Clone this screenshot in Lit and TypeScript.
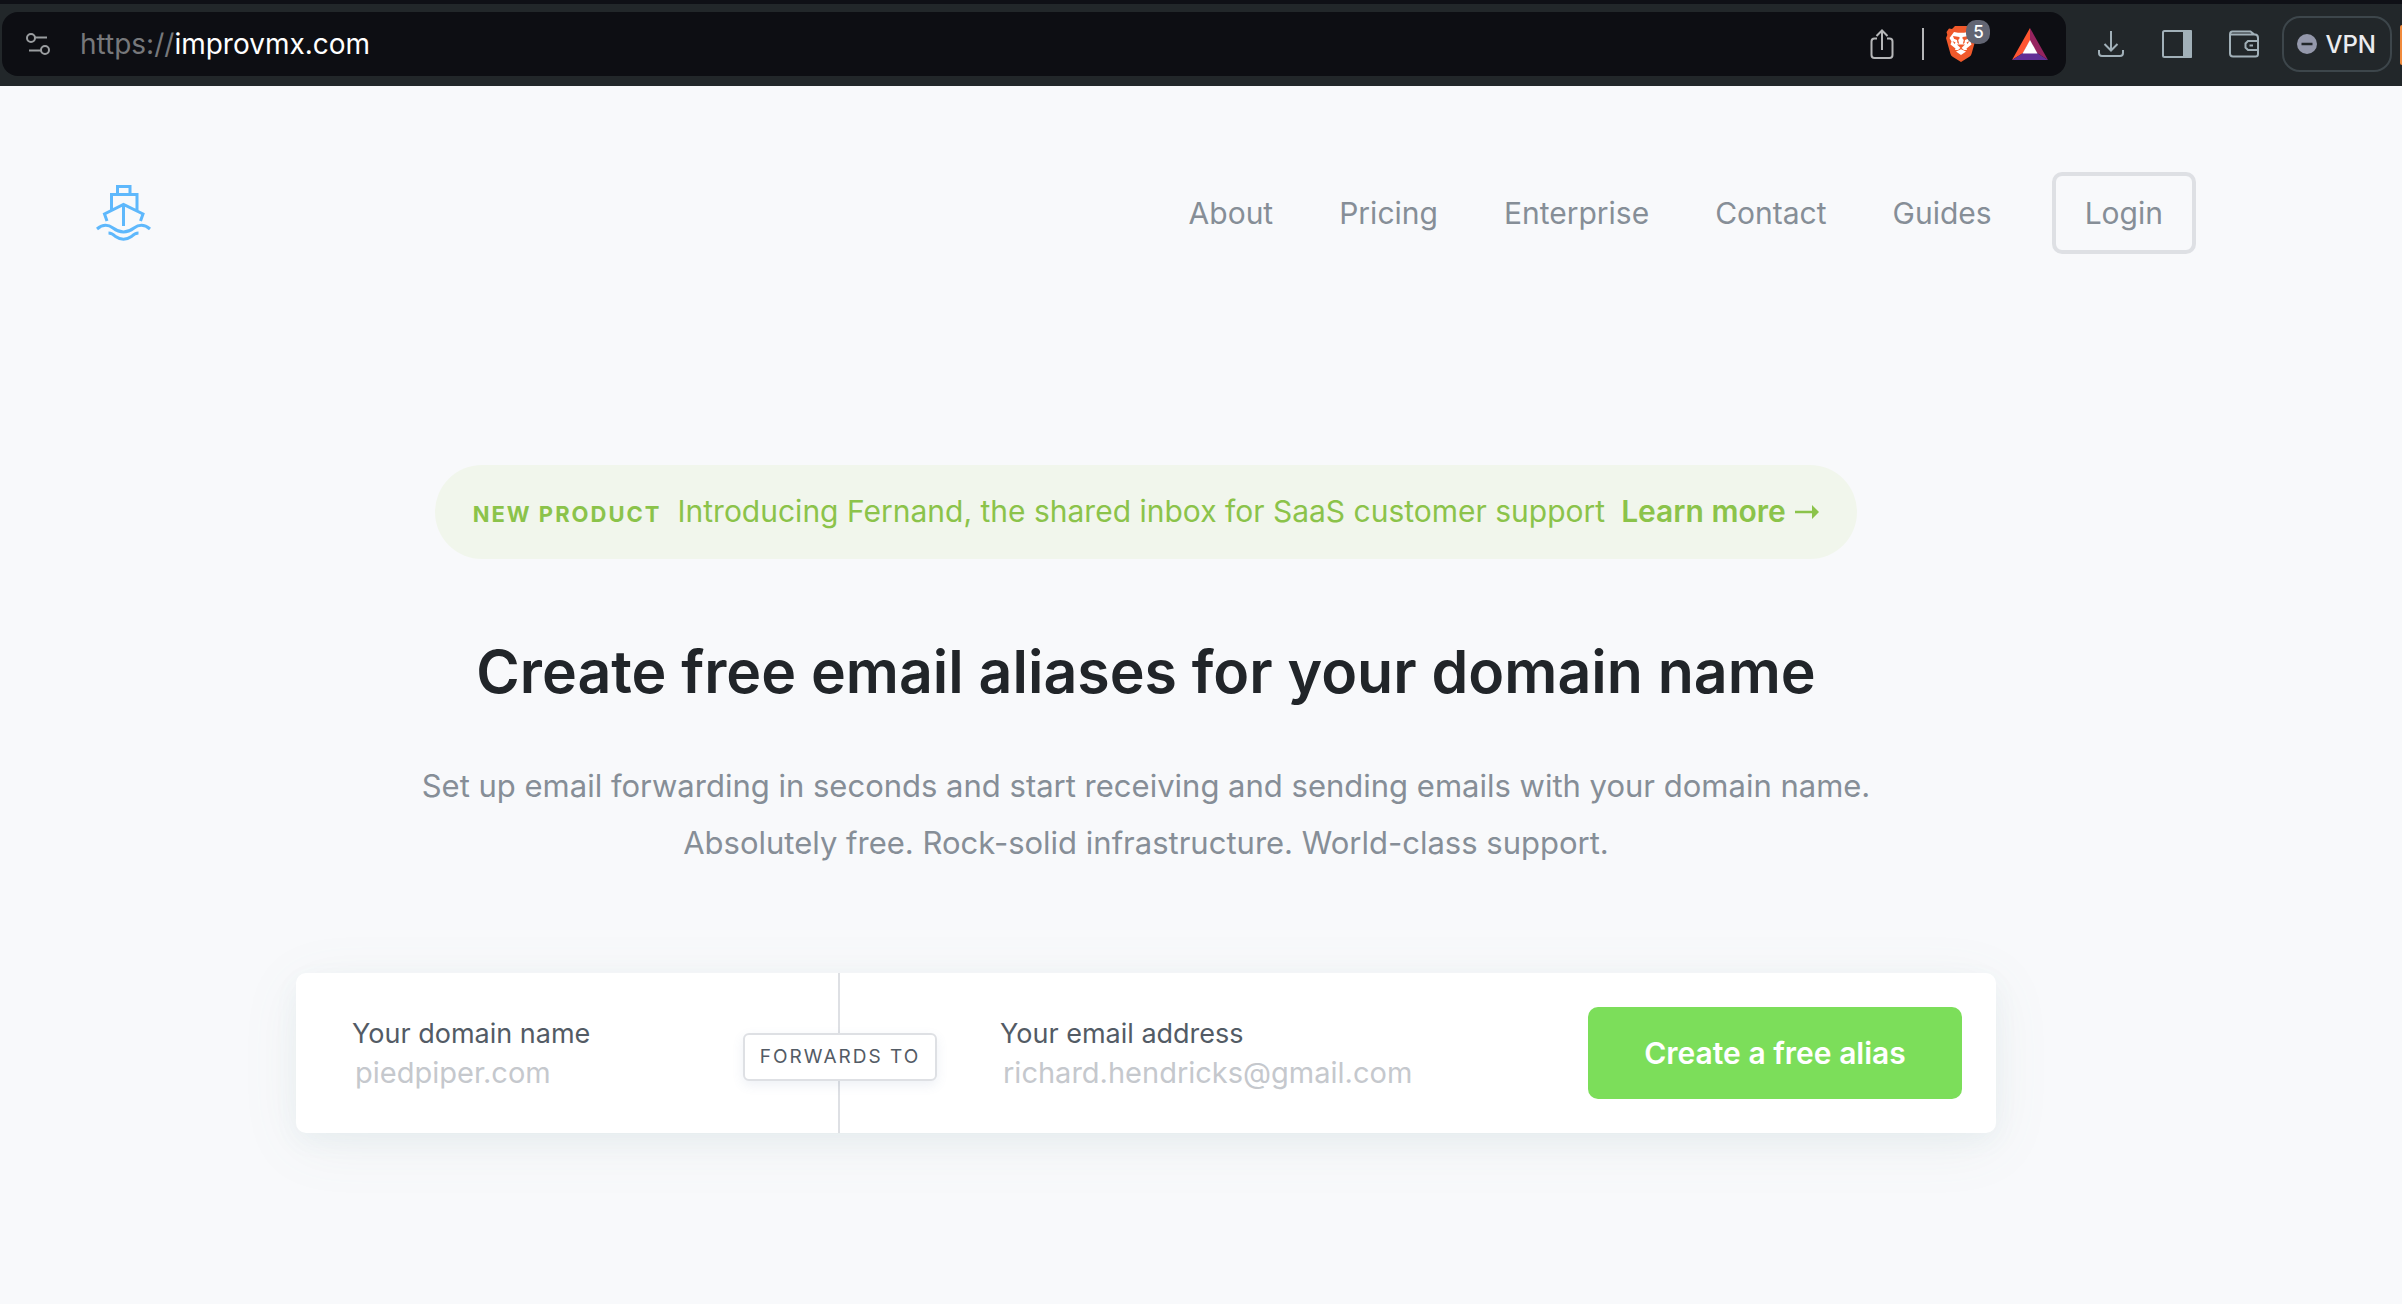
import { LitElement, html, css } from "lit";
import { customElement } from "lit/decorators.js";

const NAV_LINKS = ["About", "Pricing", "Enterprise", "Contact", "Guides"];

@customElement("browser-bar")
class BrowserBar extends LitElement {
  static styles = css`
    :host {
      display: block;
      font-family: Inter, "Liberation Sans", sans-serif;
    }
    .bar {
      display: flex;
      align-items: center;
      height: 82px;
      padding-left: 2px;
      border-top: 4px solid #0f1016;
      background: #22272a;
      overflow: hidden;
    }
    .address {
      display: flex;
      flex: 1;
      align-items: center;
      height: 64px;
      margin-bottom: 2px;
      padding: 0 18px 0 24px;
      border-radius: 16px;
      background: #0d0e13;
      box-sizing: border-box;
    }
    .url {
      flex: 1;
      margin-left: 28px;
      font-size: 28px;
      line-height: 36px;
      color: #fff;
      text-decoration: none;
    }
    .scheme {
      color: #77787b;
    }
    button {
      display: flex;
      align-items: center;
      padding: 0;
      border: 0;
      background: none;
      color: inherit;
      font: inherit;
    }
    svg {
      display: block;
    }
    .share {
      color: #b5b6b8;
    }
    .rule {
      width: 2px;
      height: 32px;
      margin: 0 22px 0 28px;
      background: #b5b6b8;
    }
    .shield {
      position: relative;
      margin-right: 36px;
    }
    .count {
      position: absolute;
      top: -6px;
      left: 20px;
      width: 24px;
      height: 24px;
      border-radius: 10px;
      background: #626573;
      color: #fff;
      font-size: 17px;
      font-weight: 500;
      line-height: 24px;
      text-align: center;
    }
    .tools {
      display: flex;
      align-items: center;
      gap: 36px;
      margin: 0 22px 2px 30px;
      color: #a1b0b8;
    }
    .vpn {
      gap: 8px;
      height: 56px;
      margin-bottom: 2px;
      padding: 0 14px 0 13px;
      border: 2px solid #3d464b;
      border-radius: 18px;
      color: #ebecef;
      font-size: 24px;
      font-weight: 500;
      box-sizing: border-box;
    }
    .next {
      width: 2px;
      height: 40px;
      margin-left: 8px;
      border-radius: 4px 0 0 4px;
      background: #f08a3c;
    }
  `;

  render() {
    return html`
      <header class="bar">
        <div class="address">
          <button aria-label="Site settings">
            <svg width="26" height="24" viewBox="0 0 26 24" fill="none" stroke="#9a9da0" stroke-width="2">
              <circle cx="5" cy="6" r="4" />
              <path d="M9 5.500H21M3 18.500H15" />
              <circle cx="19" cy="18" r="4" />
            </svg>
          </button>
          <a class="url" href="https://improvmx.com"><span class="scheme">https://</span>improvmx.com</a>
          <button class="share" aria-label="Share">
            <svg width="24" height="32" viewBox="0 0 24 32" fill="none" stroke="currentColor" stroke-width="2">
              <path d="M7 10.500H4.500Q1.500 10.500 1.500 13.500V27Q1.500 30 4.500 30H19.500Q22.500 30 22.500 27V13.500Q22.500 10.500 19.500 10.500H17M12 22V2.500M6.500 8L12 2.500L17.500 8" />
            </svg>
          </button>
          <span class="rule"></span>
          <button class="shield" aria-label="Shields, 5 blocked">
            <svg width="30" height="36" viewBox="0 0 30 36">
              <path fill="#f0592b" d="M9 0H21L24 3L27 2.500L29.500 6L28.700 9L30 12L25.500 28Q25 30 23 31L15 36L7 31Q5 30 4.500 28L0 12L1.300 9L.5 6L3 2.500L6 3Z" />
              <path fill="#fff" d="M8 6L12 6.800H18L22 6L26.500 12L24.500 15.500L25.500 18.500L20.500 22.500L21 24L18 24L15 21.500L12 24L9 24L9.500 22.500L4.500 18.500L5.500 15.500L3.500 12Z" />
              <path fill="#fff" d="M10 25.500L15 23.200L20 25.500L15 29Z" />
              <path fill="#f0592b" d="M7 10L13.500 11V12.500L12.200 14L13.200 18L11.500 17L11 14L8 12.800ZM23 10L16.500 11V12.500L17.800 14L16.800 18L18.500 17L19 14L22 12.800ZM11 18.500H19L15 22.500ZM6.500 15L9.500 16.500L8.500 18ZM23.500 15L20.500 16.500L21.500 18Z" />
            </svg>
            <span class="count">5</span>
          </button>
          <button aria-label="Rewards">
            <svg width="36" height="32" viewBox="0 0 36 32">
              <path fill="#ff5531" d="M18 0V13L11 25L0 32Z" />
              <path fill="#96245f" d="M18 0L36 32L25 25L18 13Z" />
              <path fill="#612f96" d="M0 32L11 25H25L36 32Z" />
              <path fill="#fff" d="M18 12L25.500 25.500H10.500Z" />
            </svg>
          </button>
        </div>
        <div class="tools">
          <button aria-label="Downloads">
            <svg width="30" height="28" viewBox="0 0 30 28" fill="none" stroke="currentColor" stroke-width="2">
              <path d="M15 1V20M8.500 14L15 20.500L21.500 14M3 20V23Q3 26 6 26H24Q27 26 27 23V20" />
            </svg>
          </button>
          <button aria-label="Sidebar">
            <svg width="30" height="28" viewBox="0 0 30 28">
              <rect x="1" y="1" width="28" height="26" rx="1.500" fill="none" stroke="currentColor" stroke-width="2" />
              <path fill="currentColor" d="M21 0H29Q30 0 30 1V27Q30 28 29 28H21Z" />
            </svg>
          </button>
          <button aria-label="Wallet">
            <svg width="32" height="28" viewBox="0 0 32 28" fill="none" stroke="currentColor" stroke-width="2">
              <path d="M2 4.500Q2 1.500 4.500 1.500H22.500L27 5M2 4.500H27Q30 4.500 30 8V24Q30 26.500 27.500 26.500H5Q2 26.500 2 23.500V4.500M30 11H20L17.500 13.500V17.500L20 20H30M21.500 15.500H25" />
            </svg>
          </button>
        </div>
        <button class="vpn">
          <svg width="20" height="20" viewBox="0 0 20 20">
            <circle cx="10" cy="10" r="10" fill="#9498ab" />
            <path d="M4.500 10H15.500" stroke="#22272a" stroke-width="2.500" />
          </svg>
          VPN
        </button>
        <span class="next"></span>
      </header>
    `;
  }
}

@customElement("alias-form")
class AliasForm extends LitElement {
  static styles = css`
    :host {
      display: block;
    }
    .card {
      display: flex;
      max-width: 1700px;
      height: 160px;
      margin: 0 auto;
      border-radius: 10px;
      background: #fff;
      box-shadow: 0 12px 60px rgba(120, 140, 130, 0.08), 0 8px 24px rgba(90, 150, 170, 0.06);
    }
    .field {
      display: flex;
      flex-direction: column;
      justify-content: center;
      box-sizing: border-box;
    }
    .domain {
      position: relative;
      flex: 0 0 32%;
      padding: 0 110px 0 56px;
      border-right: 2px solid #dee0e4;
    }
    .email {
      flex: 1;
      min-width: 0;
      padding: 0 40px 0 160px;
    }
    label {
      color: #535b65;
      font-size: 27px;
      line-height: 38px;
    }
    input {
      width: 100%;
      height: 38px;
      padding: 0 3px;
      border: 0;
      outline: 0;
      background: none;
      color: #535b65;
      font: inherit;
      font-size: 29px;
      box-sizing: border-box;
    }
    input::placeholder {
      color: #c5c8cd;
      opacity: 1;
    }
    .forwards {
      position: absolute;
      top: 60px;
      right: -99px;
      width: 194px;
      height: 48px;
      border: 2px solid #dee0e4;
      border-radius: 6px;
      background: #fff;
      box-shadow: 0 4px 12px rgba(80, 110, 160, 0.1);
      color: #535b65;
      font-size: 19px;
      line-height: 44px;
      letter-spacing: 2px;
      text-align: center;
      white-space: nowrap;
      box-sizing: border-box;
    }
    .submit {
      align-self: center;
      width: 374px;
      height: 92px;
      margin-right: 34px;
      border: 0;
      border-radius: 10px;
      background: #7cde5a;
      color: #fff;
      font: inherit;
      font-size: 30px;
      font-weight: 600;
    }
  `;

  render() {
    return html`
      <form class="card">
        <div class="field domain">
          <label for="domain">Your domain name</label>
          <input id="domain" type="text" placeholder="piedpiper.com" />
          <span class="forwards">FORWARDS TO</span>
        </div>
        <div class="field email">
          <label for="email">Your email address</label>
          <input id="email" type="email" placeholder="richard.hendricks@gmail.com" />
        </div>
        <button class="submit" type="button">Create a free alias</button>
      </form>
    `;
  }
}

@customElement("app-root")
class AppRoot extends LitElement {
  static styles = css`
    :host {
      display: block;
      min-height: 100vh;
      background: #f8f9fb;
      font-family: Inter, Roboto, "Liberation Sans", sans-serif;
    }
    .page {
      padding: 86px 206px 120px 96px;
    }
    .top {
      display: flex;
      align-items: center;
      justify-content: space-between;
    }
    .logo,
    .logo svg {
      display: block;
    }
    nav {
      display: flex;
      align-items: center;
      gap: 60px;
      color: #868e97;
      font-size: 30px;
      line-height: 36px;
    }
    .links {
      display: flex;
      gap: 66px;
    }
    nav a {
      color: inherit;
      text-decoration: none;
    }
    .login {
      padding: 19px 29px;
      border: 4px solid #dee0e4;
      border-radius: 10px;
    }
    .banner {
      display: flex;
      align-items: baseline;
      width: fit-content;
      height: 94px;
      margin: 211px auto 0;
      padding: 0 38px;
      border-radius: 47px;
      background: #f1f6ec;
      color: #8bc34a;
      font-size: 30px;
      line-height: 92px;
      text-decoration: none;
      white-space: nowrap;
    }
    .tag {
      margin-right: 16px;
      font-size: 22px;
      font-weight: 700;
      letter-spacing: 2px;
    }
    .more {
      margin-left: 16px;
      font-weight: 600;
    }
    .arrow {
      margin-left: 2px;
      vertical-align: 3px;
    }
    h1 {
      margin: 77px 0 0;
      color: #212529;
      font-size: 59px;
      font-weight: 600;
      line-height: 72px;
      text-align: center;
    }
    .lead {
      margin: 49px 0 102px;
      color: #868e97;
      font-size: 31px;
      line-height: 57px;
      text-align: center;
    }
  `;

  render() {
    return html`
      <browser-bar></browser-bar>
      <div class="page">
        <header class="top">
          <a class="logo" href="#" aria-label="ImprovMX">
            <svg width="56" height="56" viewBox="0 0 56 56" fill="none" stroke="#5eb8fc" stroke-width="3">
              <path d="M21.500 9V1.500H34V9M15.500 25.500V9.500H41V25.500M11 36L8.500 29L27.500 19.500L47 29L44.500 36M27.500 19V41" />
              <path d="M1 44Q9 37 17 43Q27.500 51 38 43Q46 37 54 44M12.500 48Q16 48 19.500 51.500Q27.500 57 35.500 51.500Q39 48 42.500 48" />
            </svg>
          </a>
          <nav>
            <div class="links">${NAV_LINKS.map((name) => html`<a href="#">${name}</a>`)}</div>
            <a class="login" href="#">Login</a>
          </nav>
        </header>
        <main>
          <a class="banner" href="#">
            <span class="tag">NEW PRODUCT</span>
            <span>Introducing Fernand, the shared inbox for SaaS customer support</span>
            <span class="more">Learn more
              <svg class="arrow" width="24" height="14" viewBox="0 0 24 14" fill="#8bc34a" aria-hidden="true">
                <path d="M0 5.800H17V0L24 7L17 14V8.200H0Z" />
              </svg></span>
          </a>
          <h1>Create free email aliases for your domain name</h1>
          <p class="lead">
            Set up email forwarding in seconds and start receiving and sending emails with your domain name.<br />
            Absolutely free. Rock-solid infrastructure. World-class support.
          </p>
          <alias-form></alias-form>
        </main>
      </div>
    `;
  }
}
